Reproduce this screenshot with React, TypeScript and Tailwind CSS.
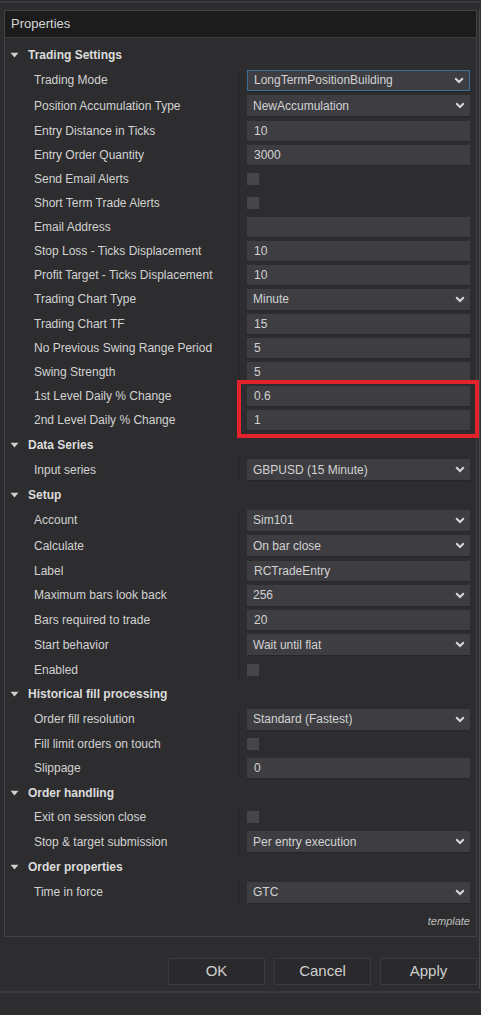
import React from 'react';

type Row =
  | { kind: 'section'; label: string }
  | { kind: 'select'; label: string; value: string; focused?: boolean }
  | { kind: 'text'; label: string; value: string }
  | { kind: 'check'; label: string };

const rows: Row[] = [
  { kind: 'section', label: 'Trading Settings' },
  { kind: 'select', label: 'Trading Mode', value: 'LongTermPositionBuilding', focused: true },
  { kind: 'select', label: 'Position Accumulation Type', value: 'NewAccumulation' },
  { kind: 'text', label: 'Entry Distance in Ticks', value: '10' },
  { kind: 'text', label: 'Entry Order Quantity', value: '3000' },
  { kind: 'check', label: 'Send Email Alerts' },
  { kind: 'check', label: 'Short Term Trade Alerts' },
  { kind: 'text', label: 'Email Address', value: '' },
  { kind: 'text', label: 'Stop Loss - Ticks Displacement', value: '10' },
  { kind: 'text', label: 'Profit Target - Ticks Displacement', value: '10' },
  { kind: 'select', label: 'Trading Chart Type', value: 'Minute' },
  { kind: 'text', label: 'Trading Chart TF', value: '15' },
  { kind: 'text', label: 'No Previous Swing Range Period', value: '5' },
  { kind: 'text', label: 'Swing Strength', value: '5' },
  { kind: 'text', label: '1st Level Daily % Change', value: '0.6' },
  { kind: 'text', label: '2nd Level Daily % Change', value: '1' },
  { kind: 'section', label: 'Data Series' },
  { kind: 'select', label: 'Input series', value: 'GBPUSD (15 Minute)' },
  { kind: 'section', label: 'Setup' },
  { kind: 'select', label: 'Account', value: 'Sim101' },
  { kind: 'select', label: 'Calculate', value: 'On bar close' },
  { kind: 'text', label: 'Label', value: 'RCTradeEntry' },
  { kind: 'select', label: 'Maximum bars look back', value: '256' },
  { kind: 'text', label: 'Bars required to trade', value: '20' },
  { kind: 'select', label: 'Start behavior', value: 'Wait until flat' },
  { kind: 'check', label: 'Enabled' },
  { kind: 'section', label: 'Historical fill processing' },
  { kind: 'select', label: 'Order fill resolution', value: 'Standard (Fastest)' },
  { kind: 'check', label: 'Fill limit orders on touch' },
  { kind: 'text', label: 'Slippage', value: '0' },
  { kind: 'section', label: 'Order handling' },
  { kind: 'check', label: 'Exit on session close' },
  { kind: 'select', label: 'Stop & target submission', value: 'Per entry execution' },
  { kind: 'section', label: 'Order properties' },
  { kind: 'select', label: 'Time in force', value: 'GTC' },
];

function Chevron() {
  return (
    <svg width="10" height="7" viewBox="0 0 10 7" className="shrink-0">
      <polyline points="1.2,1.2 5,5 8.8,1.2" fill="none" stroke="#d8d8d8" strokeWidth="2" />
    </svg>
  );
}

function Caret() {
  return (
    <svg width="9" height="6" viewBox="0 0 9 6" className="shrink-0">
      <polygon points="0.5,0.8 8.5,0.8 4.5,5.4" fill="#d0d0d0" />
    </svg>
  );
}

function Value({ row }: { row: Row }) {
  if (row.kind === 'check') {
    return <div className="w-[12px] h-[12px] bg-[#46464a]" />;
  }
  if (row.kind === 'select') {
    return (
      <div
        className={
          'w-full h-[21px] flex items-center justify-between pl-[6px] pr-[5px] bg-[#3e3e42] shadow-[0_1px_0_#262628] ' +
          (row.focused ? 'border border-[#3e6f98]' : '')
        }
      >
        <span>{row.value}</span>
        <Chevron />
      </div>
    );
  }
  if (row.kind === 'text') {
    return (
      <div className="w-full h-[20px] flex items-center pl-[7px] bg-[#3e3e42] shadow-[0_1px_0_#262628]">
        {row.value}
      </div>
    );
  }
  return null;
}

export default function App() {
  return (
    <div
      className="relative w-[481px] h-[1015px] overflow-hidden bg-[#2d2d2f] text-[12px] text-[#d2d2d2]"
      style={{ fontFamily: '"Liberation Sans", Arial, sans-serif' }}
    >
      {/* top window strip */}
      <div className="h-[9px] border-t-[2px] border-[#3a3a3c] mt-[1px]" />

      {/* properties panel */}
      <div className="mx-[4px] h-[927px] border border-[#434346] flex flex-col">
        <div className="h-[27px] bg-[#1c1c1d] flex items-center pl-[6px] text-[13px] text-[#d8d8d8] border-b border-[#3a3a3c]">
          Properties
        </div>
        <div className="pt-[4.5px] flex flex-col">
          {rows.map((row, i) =>
            row.kind === 'section' ? (
              <div key={i} className="h-[25px] flex items-center pl-[5px] gap-[9px] font-bold text-[#dcdcdc]">
                <Caret />
                <span>{row.label}</span>
              </div>
            ) : (
              <div key={i} className={(row.kind === 'select' ? 'h-[25.5px]' : 'h-[24px]') + ' flex items-center'}>
                <div className="w-[234px] pl-[29px] whitespace-nowrap">{row.label}</div>
                <div className="flex-1 h-full flex items-center pl-[7px] pr-[6px] border-l border-[#28282a]">
                  <Value row={row} />
                </div>
              </div>
            )
          )}
        </div>
        <div className="mt-auto pb-[7px] pr-[6px] text-right italic text-[11px] text-[#bdbdbd]">template</div>
      </div>

      {/* buttons */}
      <div className="flex justify-end gap-[9px] pr-[4px] mt-[21px]">
        {['OK', 'Cancel', 'Apply'].map((b) => (
          <div
            key={b}
            className="w-[97px] h-[27px] flex items-center justify-center border border-[#3c3c3e] bg-[#2a2a2c] text-[15px] text-[#d0d0d0]"
          >
            {b}
          </div>
        ))}
      </div>
      <div className="mt-[6px] border-t-[2px] border-[#3a3a3c]" />

      {/* right window edge */}
      <div className="absolute top-[9px] right-[1px] w-[1px] h-[980px] bg-[#4a4a4c]" />

      {/* red annotation box */}
      <div className="absolute left-[237px] top-[380px] w-[242px] h-[58px] border-[4px] border-[#e3222b]" />
    </div>
  );
}
